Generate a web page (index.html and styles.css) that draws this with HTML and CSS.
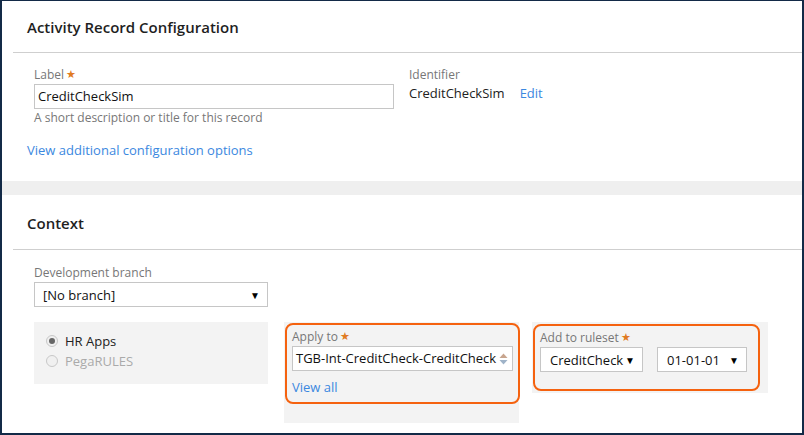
FILE: index.html
```html
<!DOCTYPE html>
<html>
<head>
<meta charset="utf-8">
<link rel="stylesheet" href="styles.css">
</head>
<body>
<div class="frame">
  <section class="section">
    <div class="section-head"><h2>Activity Record Configuration</h2></div>
    <div class="section-body first">
      <div class="row">
        <div class="field label-field">
          <div class="lbl">Label<span class="req">&#9733;</span></div>
          <div class="input wide">CreditCheckSim</div>
          <div class="hint">A short description or title for this record</div>
        </div>
        <div class="field ident">
          <div class="lbl">Identifier</div>
          <div class="ident-row"><span class="val">CreditCheckSim</span><a class="link">Edit</a></div>
        </div>
      </div>
      <a class="link more">View additional configuration options</a>
    </div>
  </section>
  <div class="band"></div>
  <section class="section">
    <div class="section-head tall"><h2>Context</h2></div>
    <div class="section-body second">
      <div class="lbl">Development branch</div>
      <div class="select branch"><span>[No branch]</span><span class="caret">&#9660;</span></div>
      <div class="cols">
        <div class="col apps">
          <div class="radio on"><span class="dot"></span>HR Apps</div>
          <div class="radio off"><span class="dot"></span>PegaRULES</div>
        </div>
        <div class="col applyto">
          <div class="hl">
            <div class="lbl">Apply to<span class="req">&#9733;</span></div>
            <div class="input spin"><span>TGB-Int-CreditCheck-CreditCheck</span>
              <svg class="arrows" width="9" height="12" viewBox="0 0 9 12"><path d="M4.5 0.5 L8.5 5 L0.5 5 Z" fill="#c8a58e"/><path d="M0.5 7 L8.5 7 L4.5 11.5 Z" fill="#9fb3c8"/></svg>
            </div>
            <a class="link viewall">View all</a>
          </div>
        </div>
        <div class="col ruleset">
          <div class="hl">
            <div class="lbl">Add to ruleset<span class="req">&#9733;</span></div>
            <div class="sel-row">
              <div class="select rs"><span>CreditCheck</span><span class="caret">&#9660;</span></div>
              <div class="select ver"><span>01-01-01</span><span class="caret">&#9660;</span></div>
            </div>
          </div>
        </div>
      </div>
    </div>
  </section>
</div>
</body>
</html>
```

FILE: styles.css
```css
* { box-sizing: border-box; }
html, body { margin: 0; padding: 0; background: #fff; }
body { font-family: "Open Sans", "Noto Sans", sans-serif; color: #222; font-size: 13px; }
.frame {
  width: 804px; height: 435px;
  border-style: solid; border-color: #132a47;
  border-width: 1px 2px 2px 2px;
  overflow: hidden;
}
.section-head {
  margin-left: 11px;
  height: 52px;
  border-bottom: 1px solid #cfcfcf;
  display: flex; align-items: center;
  padding-left: 14px;
  padding-top: 1px;
}
.section-head.tall { height: 55px; padding-top: 2px; }
h2 { margin: 0; font-size: 15px; font-weight: 600; color: #1f1f1f; }
.section-body { padding-left: 32px; }
.section-body.first { padding-top: 13px; height: 128px; }
.row { display: flex; }
.label-field { width: 375px; }
.lbl { font-size: 12px; line-height: 18px; color: #777; }
.req { color: #e07b22; font-size: 11px; margin-left: 2px; position: relative; top: -1px; }
.input {
  height: 25px; border: 1px solid #c6c6c6; background: #fff;
  font-size: 13px; line-height: 23px; padding-left: 3px; color: #111;
}
.input.wide { width: 360px; }
.hint { font-size: 12px; line-height: 18px; color: #777; }
.ident-row { display: flex; gap: 15px; line-height: 18px; font-size: 13px; }
.link { color: #3b88e0; cursor: pointer; font-size: 13px; }
.more { display: block; margin-left: -7px; margin-top: 14px; line-height: 18px; }
.band { height: 14px; background: #efefef; }
.section-head + .section-body.second { padding-top: 14px; }
.select {
  height: 25px; border: 1px solid #c6c6c6; background: #fff;
  display: flex; align-items: center; justify-content: space-between;
  font-size: 13px; color: #111; padding: 0 7px 0 8px;
}
.caret { font-size: 10px; color: #000; }
.branch { width: 234px; }
.cols { display: flex; margin-top: 15px; }
.col { background: #f3f3f3; }
.apps { width: 234px; height: 62px; padding: 9px 0 0 12px; margin-right: 16px; }
.radio { display: flex; align-items: center; font-size: 13px; line-height: 20px; color: #222; }
.radio.off { color: #aaa; }
.dot {
  width: 12px; height: 12px; border-radius: 50%;
  border: 1px solid #c8c8c8; background: #f0f0f0; margin-right: 7px; position: relative;
}
.radio.on .dot::after {
  content: ""; position: absolute; left: 2px; top: 2px; width: 6px; height: 6px;
  border-radius: 50%; background: #666;
}
.applyto { width: 235px; height: 101px; margin-right: 13px; }
.hl {
  border: 2.5px solid #f5620f; border-radius: 8px;
  padding: 3px 0 0 5px;
}
.applyto .hl { margin: 1px -1px 0 1px; height: 81px; }
.spin { width: 221px; display: flex; justify-content: space-between; align-items: center; padding: 0 4px 0 3px; }
.viewall { display: block; line-height: 18px; margin-top: 7px; }
.ruleset { width: 236px; height: 71px; }
.ruleset .hl { margin: 2px 8px 0 1px; height: 67px; padding-left: 5px; }
.sel-row { display: flex; gap: 14px; }
.rs { width: 103px; padding-left: 9px; }
.ver { width: 90px; padding-left: 9px; }
```
